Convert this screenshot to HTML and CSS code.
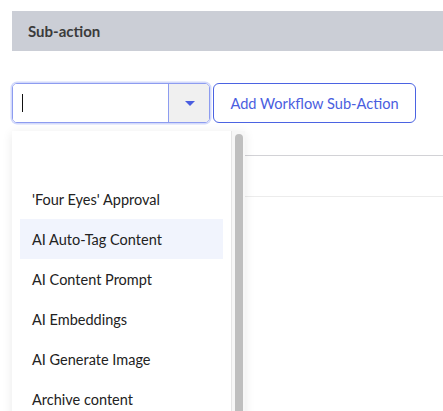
FILE: index.html
```html
<!DOCTYPE html>
<html>
<head>
<meta charset="utf-8">
<link rel="stylesheet" href="styles.css">
</head>
<body>
<div class="page">
  <div class="section-head">Sub-action</div>
  <div class="controls">
    <div class="select">
      <div class="select-input"><span class="caret"></span></div>
      <div class="select-toggle">
        <svg width="10" height="5" viewBox="0 0 10 5"><path d="M0 0H10L5 5Z" fill="#4a5ee0"/></svg>
      </div>
    </div>
    <button class="add-btn">Add Workflow Sub-Action</button>
  </div>
  <div class="table">
    <div class="table-row"></div>
    <div class="table-row light"></div>
  </div>
  <div class="dropdown">
    <ul class="options">
      <li class="option"></li>
      <li class="option">'Four Eyes' Approval</li>
      <li class="option hover">AI Auto-Tag Content</li>
      <li class="option">AI Content Prompt</li>
      <li class="option">AI Embeddings</li>
      <li class="option">AI Generate Image</li>
      <li class="option">Archive content</li>
    </ul>
    <div class="scrollbar"><div class="thumb"></div></div>
  </div>
</div>
</body>
</html>
```

FILE: styles.css
```css
html, body {
  margin: 0;
  padding: 0;
  background: #ffffff;
  overflow: hidden;
}
body {
  font-family: Lato, "Liberation Sans", sans-serif;
  width: 443px;
  height: 411px;
}
.page {
  position: relative;
  height: 411px;
  overflow: hidden;
  padding: 11px 0 0 12px;
  box-sizing: border-box;
}
.section-head {
  height: 40px;
  background: #cbced6;
  display: flex;
  align-items: center;
  padding-left: 16px;
  font-weight: 700;
  font-size: 15px;
  color: #3b3b3b;
}
.controls {
  margin-top: 32px;
  display: flex;
  gap: 3px;
  height: 40px;
}
.select {
  width: 196px;
  height: 38px;
  border: 1px solid #8d9cf0;
  border-radius: 5px;
  box-shadow: 0 0 0 1.5px #d3dafb;
  display: flex;
  overflow: hidden;
}
.select-input {
  flex: 1;
  background: #fff;
  display: flex;
  align-items: center;
  padding-left: 9px;
}
.caret {
  width: 1px;
  height: 18px;
  background: #111;
}
.select-toggle {
  width: 40px;
  background: #f0f0f0;
  border-left: 1px solid #8d9cf0;
  display: flex;
  align-items: center;
  justify-content: center;
}
.select-toggle svg {
  display: block;
  margin-left: 1px;
}
.add-btn {
  width: 203px;
  height: 40px;
  background: #fff;
  border: 1px solid #4b63e2;
  border-radius: 6px;
  color: #4a5ee0;
  font-family: Lato, "Liberation Sans", sans-serif;
  font-size: 14.6px;
  padding: 0;
}
.table {
  margin-top: 32px;
}
.table-row {
  height: 40px;
  border-top: 1px solid #d2d2d6;
}
.table-row.light {
  border-top-color: #ececec;
}
.dropdown {
  position: absolute;
  left: 12px;
  top: 131px;
  width: 233px;
  height: 290px;
  background: #fff;
  display: flex;
  box-shadow: 0 2px 10px rgba(0, 0, 0, 0.09);
}
.options {
  list-style: none;
  margin: 0;
  padding: 8px;
  flex: 1;
  border-right: 1px solid #e6e6e6;
}
.option {
  height: 40px;
  display: flex;
  align-items: center;
  padding-left: 12px;
  font-size: 14.5px;
  color: #222;
}
.option.hover {
  background: #f1f4fd;
}
.scrollbar {
  width: 13px;
  background: #f7f7f7;
  position: relative;
}
.thumb {
  position: absolute;
  left: 3px;
  top: 3px;
  width: 8px;
  height: 300px;
  background: #bfbfbf;
  border-radius: 4px;
}
```
